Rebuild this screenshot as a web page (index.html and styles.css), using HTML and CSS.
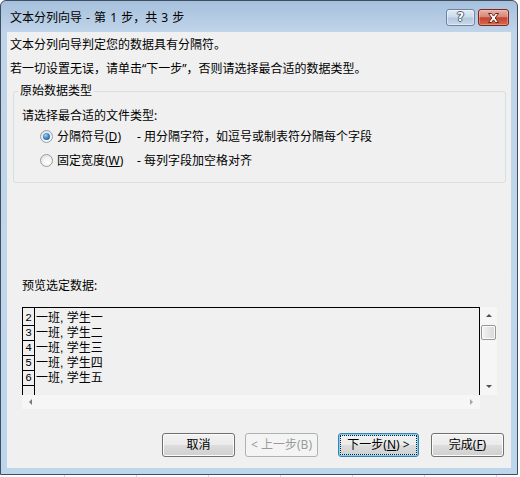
FILE: index.html
```html
<!DOCTYPE html>
<html lang="zh-CN">
<head>
<meta charset="utf-8">
<title>文本分列向导</title>
<link rel="stylesheet" href="styles.css">
</head>
<body>
<div class="window">
  <div class="titlebar">
    <span class="title">文本分列向导 - 第 1 步，共 3 步</span>
    <div class="caption-btns">
      <span class="cbtn help">?</span>
      <span class="cbtn close"><svg width="13" height="10" viewBox="0 0 13 10"><path d="M1.5 0.5h3l2 2.6 2-2.6h3L8.2 5l3.3 4.5h-3l-2-2.6-2 2.6h-3L4.8 5z" fill="#fff" stroke="#6b2418" stroke-width="1" stroke-linejoin="round"/></svg></span>
    </div>
  </div>
  <div class="client">
    <p class="line">文本分列向导判定您的数据具有分隔符。</p>
    <p class="line">若一切设置无误，请单击“下一步”，否则请选择最合适的数据类型。</p>
    <fieldset class="group">
      <legend class="legend">原始数据类型</legend>
      <div class="prompt">请选择最合适的文件类型:</div>
      <div class="radio-row">
        <span class="radio checked"><span class="dot"></span></span>
        <span class="rlabel">分隔符号(<u>D</u>)</span>
        <span class="rdesc">- 用分隔字符，如逗号或制表符分隔每个字段</span>
      </div>
      <div class="radio-row second">
        <span class="radio"></span>
        <span class="rlabel">固定宽度(<u>W</u>)</span>
        <span class="rdesc">- 每列字段加空格对齐</span>
      </div>
    </fieldset>
    <div class="preview-label">预览选定数据:</div>
    <div class="preview">
      <div class="data">
        <div class="row first"><span class="num">2</span><span class="txt">一班, 学生一</span></div>
        <div class="row"><span class="num">3</span><span class="txt">一班, 学生二</span></div>
        <div class="row"><span class="num">4</span><span class="txt">一班, 学生三</span></div>
        <div class="row"><span class="num">5</span><span class="txt">一班, 学生四</span></div>
        <div class="row"><span class="num">6</span><span class="txt">一班, 学生五</span></div>
        <div class="row"><span class="num"></span><span class="txt"></span></div>
      </div>
      <div class="vscroll">
        <span class="sbtn"><span class="tri up"></span></span>
        <span class="thumb"></span>
        <span class="sfill"></span>
        <span class="sbtn"><span class="tri down"></span></span>
      </div>
      <div class="hscroll">
        <span class="sbtn"><span class="tri left"></span></span>
        <span class="sfill"></span>
        <span class="sbtn"><span class="tri right"></span></span>
      </div>
      <div class="corner"></div>
    </div>
    <div class="buttons">
      <span class="btn cancel">取消</span>
      <span class="btn back disabled">&lt; 上一步(B)</span>
      <span class="btn next default"><span class="focus">下一步(<u>N</u>) &gt;</span></span>
      <span class="btn finish">完成(<u>F</u>)</span>
    </div>
  </div>
</div>
<div class="sheet"></div>
</body>
</html>
```
FILE: styles.css
```css
html, body {
  margin: 0;
  padding: 0;
}
body {
  width: 520px;
  height: 477px;
  overflow: hidden;
  background: #ffffff;
  font-family: "Noto Sans", "Noto Sans CJK SC", sans-serif;
  font-size: 12px;
  color: #000;
}
.window {
  box-sizing: border-box;
  width: 518px;
  height: 475px;
  border: 1px solid #3f4f63;
  border-radius: 6px 6px 0 0;
  background: linear-gradient(to bottom, #a6c0dc 0px, #c1d5ea 32px, #bdd6ec 100%);
  padding: 0 6px 6px 6px;
  display: flex;
  flex-direction: column;
}
.titlebar {
  height: 31px;
  flex: none;
  display: flex;
  align-items: flex-start;
  padding-left: 3px;
}
.title {
  line-height: 33px;
  white-space: nowrap;
  word-spacing: 1px;
}
.caption-btns {
  margin-left: auto;
  margin-right: 2px;
  margin-top: 8px;
  display: flex;
  gap: 3px;
}
.cbtn {
  box-sizing: border-box;
  height: 17px;
  border-radius: 3px;
  display: flex;
  align-items: center;
  justify-content: center;
}
.help {
  width: 29px;
  border: 1px solid #6f849e;
  background: linear-gradient(to bottom, #e2ebf5 0%, #cbdaea 48%, #b3c8de 52%, #c6d8ec 100%);
  box-shadow: inset 0 0 0 1px rgba(255,255,255,0.45);
  color: #fff;
  font-family: "DejaVu Sans", sans-serif;
  font-weight: bold;
  font-size: 12px;
  line-height: 15px;
  text-shadow: 0 0 1px #3d4d60, 1px 0 0 #56667a, -1px 0 0 #56667a, 0 1px 0 #56667a, 0 -1px 0 #56667a;
}
.close {
  width: 31px;
  border: 1px solid #7a2a20;
  background: linear-gradient(to bottom, #eab1a3 0%, #d8877a 45%, #c5432f 52%, #d46a4f 100%);
  box-shadow: inset 0 0 0 1px rgba(255,220,210,0.35);
}
.client {
  flex: 1;
  background: #f0f0f0;
  padding: 1px 0 0 3px;
  display: flex;
  flex-direction: column;
}
.line {
  margin: 0;
  height: 24px;
  line-height: 24px;
  white-space: nowrap;
}
.group {
  margin: 0 5px 0 3px;
  padding: 0 0 12px 0;
  border: 1px solid #d5dfe5;
  border-radius: 3px;
  min-width: 0;
}
.legend {
  line-height: 20px;
  padding: 0 2px;
  margin-left: 4px;
}
.prompt {
  margin: 5px 0 0 8px;
  line-height: 20px;
}
.radio-row {
  display: flex;
  align-items: center;
  height: 20px;
  padding-left: 26px;
  white-space: nowrap;
}
.radio-row.second {
  margin-top: 4px;
}
.radio {
  box-sizing: border-box;
  width: 13px;
  height: 13px;
  border-radius: 50%;
  border: 1px solid #9a9da2;
  background: radial-gradient(circle at 60% 65%, #ffffff 0%, #f3f3f3 40%, #d6d8db 100%);
  display: flex;
  align-items: center;
  justify-content: center;
  flex: none;
}
.dot {
  width: 7px;
  height: 7px;
  border-radius: 50%;
  background: radial-gradient(circle at 40% 35%, #a8d6f8 0%, #3d86c8 45%, #1a4c80 100%);
}
.rlabel {
  width: 80px;
  margin-left: 4px;
  flex: none;
}
.preview-label {
  margin: 93px 0 0 12px;
  line-height: 20px;
}
.preview {
  margin: 11px 0 0 12px;
  display: grid;
  grid-template-columns: 458px 17px;
  grid-template-rows: 88px 14px;
}
.data {
  box-sizing: border-box;
  border: 1px solid #000;
  border-bottom: 0;
  overflow: hidden;
  background: #f0f0f0;
}
.row {
  display: flex;
  height: 15px;
}
.row.first {
  height: 18px;
}
.num {
  box-sizing: border-box;
  width: 12px;
  flex: none;
  border-right: 1px solid #000;
  border-bottom: 1px solid #000;
  font-family: "Liberation Mono", monospace;
  font-size: 11px;
  line-height: 15px;
  text-align: center;
}
.row.first .num, .row.first .txt {
  padding-top: 3px;
}
.txt {
  padding-left: 1px;
  font-family: "Liberation Sans", "Noto Sans CJK SC", sans-serif;
  font-size: 12px;
  line-height: 15px;
  white-space: nowrap;
}
.vscroll {
  display: flex;
  flex-direction: column;
  background: #f6f6f6;
}
.hscroll {
  display: flex;
  background: #f6f6f6;
}
.sbtn {
  width: 17px;
  height: 17px;
  flex: none;
  display: flex;
  align-items: center;
  justify-content: center;
}
.hscroll .sbtn {
  height: 14px;
}
.sfill {
  flex: 1;
}
.thumb {
  box-sizing: border-box;
  margin: 1px 1px 0 1px;
  height: 15px;
  border: 1px solid #979797;
  border-radius: 2px;
  background: linear-gradient(to right, #f4f4f4 0%, #e6e6e6 50%, #d7d7d7 100%);
  box-shadow: inset 0 0 0 1px #fafafa;
}
.tri {
  width: 0;
  height: 0;
}
.tri.up {
  border-left: 3px solid transparent;
  border-right: 3px solid transparent;
  border-bottom: 3px solid #4f4f4f;
}
.tri.down {
  border-left: 3px solid transparent;
  border-right: 3px solid transparent;
  border-top: 3px solid #4f4f4f;
}
.tri.left {
  border-top: 3px solid transparent;
  border-bottom: 3px solid transparent;
  border-right: 3px solid #7a7a7a;
}
.tri.right {
  border-top: 3px solid transparent;
  border-bottom: 3px solid transparent;
  border-left: 3px solid #a5a5a5;
}
.corner {
  background: #f0f0f0;
}
.buttons {
  margin-top: 24px;
  padding-right: 7px;
  display: flex;
  justify-content: flex-end;
}
.btn {
  box-sizing: border-box;
  height: 24px;
  width: 73px;
  border: 1px solid #707070;
  border-radius: 3px;
  background: linear-gradient(to bottom, #f2f2f2 0%, #ebebeb 50%, #dddddd 50%, #cfcfcf 100%);
  box-shadow: inset 0 0 0 1px #fcfcfc;
  display: flex;
  align-items: center;
  justify-content: center;
  white-space: nowrap;
  line-height: 20px;
}
.btn.back {
  margin-left: 10px;
}
.btn.next {
  width: 81px;
  margin-left: 20px;
}
.btn.finish {
  margin-left: 12px;
}
.btn.disabled {
  border-color: #adb2b5;
  background: #f4f4f4;
  box-shadow: none;
  color: #9a9a9a;
}
.btn.default {
  border-color: #3c7fb1;
  box-shadow: inset 0 0 0 1px #7fd2f5, inset 0 0 0 2px #d4eef9;
  padding: 1px;
  align-items: stretch;
}
.focus {
  flex: 1;
  border: 1px dotted #1a1a1a;
  display: flex;
  align-items: center;
  justify-content: center;
}
.sheet {
  width: 520px;
  height: 2px;
  background-color: #ffffff;
  background-image: repeating-linear-gradient(to right, transparent 0px, transparent 64px, #d0d7e5 64px, #d0d7e5 65px, transparent 65px, transparent 72px);
}
```
